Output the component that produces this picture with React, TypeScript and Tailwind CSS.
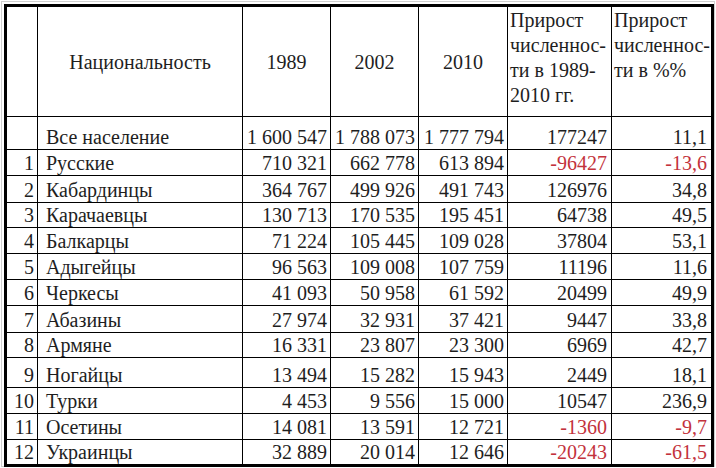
const rows: {
  n: string;
  name: string;
  a: string;
  b: string;
  c: string;
  d: string;
  e: string;
  h: string;
  neg?: boolean;
}[] = [
  { n: "", name: "Все население", a: "1 600 547", b: "1 788 073", c: "1 777 794", d: "177247", e: "11,1", h: "h-[32px]" },
  { n: "1", name: "Русские", a: "710 321", b: "662 778", c: "613 894", d: "-96427", e: "-13,6", h: "h-[25px]", neg: true },
  { n: "2", name: "Кабардинцы", a: "364 767", b: "499 926", c: "491 743", d: "126976", e: "34,8", h: "h-[26px]" },
  { n: "3", name: "Карачаевцы", a: "130 713", b: "170 535", c: "195 451", d: "64738", e: "49,5", h: "h-[24px]" },
  { n: "4", name: "Балкарцы", a: "71 224", b: "105 445", c: "109 028", d: "37804", e: "53,1", h: "h-[25px]" },
  { n: "5", name: "Адыгейцы", a: "96 563", b: "109 008", c: "107 759", d: "11196", e: "11,6", h: "h-[25px]" },
  { n: "6", name: "Черкесы", a: "41 093", b: "50 958", c: "61 592", d: "20499", e: "49,9", h: "h-[25px]" },
  { n: "7", name: "Абазины", a: "27 974", b: "32 931", c: "37 421", d: "9447", e: "33,8", h: "h-[26px]" },
  { n: "8", name: "Армяне", a: "16 331", b: "23 807", c: "23 300", d: "6969", e: "42,7", h: "h-[24px]" },
  { n: "9", name: "Ногайцы", a: "13 494", b: "15 282", c: "15 943", d: "2449", e: "18,1", h: "h-[29px]" },
  { n: "10", name: "Турки", a: "4 453", b: "9 556", c: "15 000", d: "10547", e: "236,9", h: "h-[25px]" },
  { n: "11", name: "Осетины", a: "14 081", b: "13 591", c: "12 721", d: "-1360", e: "-9,7", h: "h-[25px]", neg: true },
  { n: "12", name: "Украинцы", a: "32 889", b: "20 014", c: "12 646", d: "-20243", e: "-61,5", h: "h-[24px]", neg: true },
];

function Cell({
  children,
  className = "",
}: {
  children?: React.ReactNode;
  className?: string;
}) {
  return (
    <div className={`bg-white flex items-end pb-px leading-[22px] whitespace-nowrap ${className}`}>
      {children}
    </div>
  );
}

export default function App() {
  return (
    <div className="w-[716px] h-[468px] bg-white p-px font-['Liberation_Serif']">
      <div className="h-full border border-[#cfcfcf] p-[2px] text-[20px] text-[#1e1e1e]">
        <div className="w-[710px] border-[3px] border-black bg-black grid grid-cols-[30px_204px_87px_87px_88px_103px_99px] gap-px">
          {/* header */}
          <div className="bg-white h-[109px]" />
          <div className="bg-white flex items-center justify-center">Национальность</div>
          <div className="bg-white flex items-center justify-center">1989</div>
          <div className="bg-white flex items-center justify-center">2002</div>
          <div className="bg-white flex items-center justify-center">2010</div>
          <div className="bg-white pl-[2px] pt-px leading-[25px] whitespace-pre">
            {"Прирост\nчисленнос-\nти в 1989-\n2010 гг."}
          </div>
          <div className="bg-white pl-[2px] pt-px leading-[25px] whitespace-pre">
            {"Прирост\nчисленнос-\nти в %%"}
          </div>

          {rows.map((r) => {
            const red = r.neg ? "text-[#c3323c]" : "";
            return (
              <div key={r.name} className="contents">
                <Cell className={`${r.h} justify-end pr-[3px]`}>{r.n}</Cell>
                <Cell className="pl-2">{r.name}</Cell>
                <Cell className="justify-end pr-[3px]">{r.a}</Cell>
                <Cell className="justify-end pr-[3px]">{r.b}</Cell>
                <Cell className="justify-end pr-[3px]">{r.c}</Cell>
                <Cell className={`justify-end pr-1 ${red}`}>{r.d}</Cell>
                <Cell className={`justify-end pr-1 ${red}`}>{r.e}</Cell>
              </div>
            );
          })}
        </div>
      </div>
    </div>
  );
}
